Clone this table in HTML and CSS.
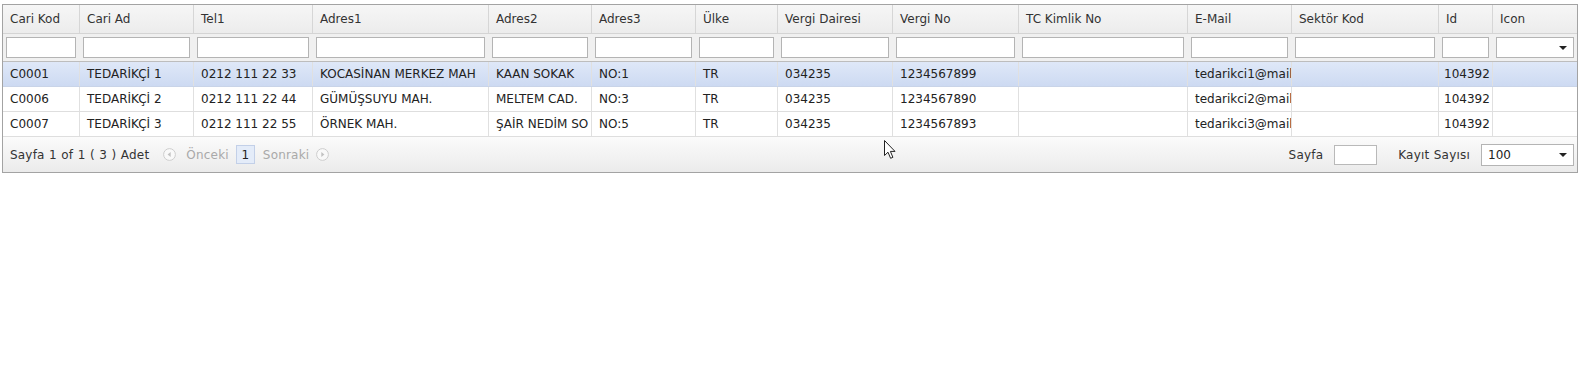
FILE: index.html
```html
<!DOCTYPE html>
<html lang="tr">
<head>
<meta charset="utf-8">
<title>Tedarikçi Listesi</title>
<link rel="stylesheet" href="styles.css">
</head>
<body>
<div class="grid">
  <div class="row hdr">
    <div class="cell">Cari Kod</div>
    <div class="cell">Cari Ad</div>
    <div class="cell">Tel1</div>
    <div class="cell">Adres1</div>
    <div class="cell">Adres2</div>
    <div class="cell">Adres3</div>
    <div class="cell">Ülke</div>
    <div class="cell">Vergi Dairesi</div>
    <div class="cell">Vergi No</div>
    <div class="cell">TC Kimlik No</div>
    <div class="cell">E-Mail</div>
    <div class="cell">Sektör Kod</div>
    <div class="cell">Id</div>
    <div class="cell">Icon</div>
  </div>
  <div class="row filter">
    <div class="cell"><input class="finput" type="text"></div>
    <div class="cell"><input class="finput" type="text"></div>
    <div class="cell"><input class="finput" type="text"></div>
    <div class="cell"><input class="finput" type="text"></div>
    <div class="cell"><input class="finput" type="text"></div>
    <div class="cell"><input class="finput" type="text"></div>
    <div class="cell"><input class="finput" type="text"></div>
    <div class="cell"><input class="finput" type="text"></div>
    <div class="cell"><input class="finput" type="text"></div>
    <div class="cell"><input class="finput" type="text"></div>
    <div class="cell"><input class="finput" type="text"></div>
    <div class="cell"><input class="finput" type="text"></div>
    <div class="cell"><input class="finput" type="text"></div>
    <div class="cell"><div class="fselect"><span class="arrow"></span></div></div>
  </div>
  <div class="row data selected">
    <div class="cell">C0001</div>
    <div class="cell">TEDARİKÇİ 1</div>
    <div class="cell">0212 111 22 33</div>
    <div class="cell">KOCASİNAN MERKEZ MAH</div>
    <div class="cell">KAAN SOKAK</div>
    <div class="cell">NO:1</div>
    <div class="cell">TR</div>
    <div class="cell">034235</div>
    <div class="cell">1234567899</div>
    <div class="cell"></div>
    <div class="cell">tedarikci1@mail</div>
    <div class="cell"></div>
    <div class="cell id">104392</div>
    <div class="cell"></div>
  </div>
  <div class="row data">
    <div class="cell">C0006</div>
    <div class="cell">TEDARİKÇİ 2</div>
    <div class="cell">0212 111 22 44</div>
    <div class="cell">GÜMÜŞSUYU MAH.</div>
    <div class="cell">MELTEM CAD.</div>
    <div class="cell">NO:3</div>
    <div class="cell">TR</div>
    <div class="cell">034235</div>
    <div class="cell">1234567890</div>
    <div class="cell"></div>
    <div class="cell">tedarikci2@mail</div>
    <div class="cell"></div>
    <div class="cell id">104392</div>
    <div class="cell"></div>
  </div>
  <div class="row data">
    <div class="cell">C0007</div>
    <div class="cell">TEDARİKÇİ 3</div>
    <div class="cell">0212 111 22 55</div>
    <div class="cell">ÖRNEK MAH.</div>
    <div class="cell">ŞAİR NEDİM SO</div>
    <div class="cell">NO:5</div>
    <div class="cell">TR</div>
    <div class="cell">034235</div>
    <div class="cell">1234567893</div>
    <div class="cell"></div>
    <div class="cell">tedarikci3@mail</div>
    <div class="cell"></div>
    <div class="cell id">104392</div>
    <div class="cell"></div>
  </div>
  <div class="pager">
    <div class="pager-left">
      <span class="summary">Sayfa 1 of 1 ( 3 ) Adet</span>
      <span class="nav disabled">
        <svg class="circ" width="13" height="13" viewBox="0 0 13 13"><circle cx="6.5" cy="6.5" r="5.9" fill="#f9f9f9" stroke="#cdcdcd"/><path d="M7.7 4 L4.6 6.5 L7.7 9 Z" fill="#c2c2c2"/></svg>
        <span class="navtext">Önceki</span>
      </span>
      <span class="pagenum">1</span>
      <span class="nav disabled">
        <span class="navtext">Sonraki</span>
        <svg class="circ" width="13" height="13" viewBox="0 0 13 13"><circle cx="6.5" cy="6.5" r="5.9" fill="#f9f9f9" stroke="#cdcdcd"/><path d="M5.3 4 L8.4 6.5 L5.3 9 Z" fill="#c2c2c2"/></svg>
      </span>
    </div>
    <div class="pager-right">
      <span class="plabel">Sayfa</span>
      <input class="pinput" type="text">
      <span class="plabel klabel">Kayıt Sayısı</span>
      <div class="pselect"><span class="pval">100</span><span class="arrow"></span></div>
    </div>
  </div>
  <svg class="cursor" width="13" height="20" viewBox="0 0 13 20"><path d="M0.5 0.5 L0.5 15.5 L4 12.2 L6.6 18.3 L8.9 17.3 L6.4 11.4 L11 11.4 Z" fill="#fff" stroke="#222" stroke-width="1" stroke-linejoin="round"/></svg>
</div>
</body>
</html>
```
FILE: styles.css
```css
html, body {
  margin: 0;
  padding: 0;
  background: #fff;
}
body {
  padding: 4px 0 0 2px;
  font-family: "DejaVu Sans", Verdana, sans-serif;
  font-size: 12px;
  color: #222;
}
.grid {
  position: relative;
  width: 1576px;
  box-sizing: border-box;
  border: 1px solid #a3a3a3;
  background: #fff;
}
.row {
  display: grid;
  box-sizing: border-box;
  grid-template-columns: 77px 114px 119px 176px 103px 104px 82px 115px 126px 169px 104px 147px 54px 1fr;
}
.cell {
  box-sizing: border-box;
  border-right: 1px solid #dcdcdc;
  white-space: nowrap;
  overflow: hidden;
  display: flex;
  align-items: center;
  padding-left: 7px;
}
.cell:last-child {
  border-right: none;
}
.hdr {
  height: 29px;
  background: linear-gradient(#f6f6f6, #ececec);
  border-bottom: 1px solid #d4d4d4;
  color: #333;
}
.hdr .cell {
  border-right-color: #d6d6d6;
}
.filter {
  height: 28px;
  background: #f0f0f0;
  border-bottom: 1px solid #bdbdbd;
}
.filter .cell {
  padding: 0 3px;
  border-right-color: #f0f0f0;
}
.finput {
  display: block;
  box-sizing: border-box;
  width: 100%;
  height: 21px;
  margin: 0;
  border: 1px solid #b4b4b4;
  background: #fff;
  padding: 0 3px;
  font: inherit;
  outline: none;
}
.fselect {
  position: relative;
  box-sizing: border-box;
  width: 100%;
  height: 21px;
  border: 1px solid #b4b4b4;
  background: #fff;
}
.arrow {
  position: absolute;
  right: 6px;
  top: 50%;
  margin-top: -2px;
  width: 0;
  height: 0;
  border-left: 4px solid transparent;
  border-right: 4px solid transparent;
  border-top: 4px solid #222;
}
.data {
  height: 25px;
  border-bottom: 1px solid #dedede;
  color: #222;
}
.data .cell {
  border-right-color: #e0e0e0;
}
.data .cell.id {
  padding-left: 5px;
}
.selected {
  background: linear-gradient(#dfe8f8, #cddaf2);
  border-bottom-color: #c9d4e8;
}
.pager {
  height: 35px;
  display: flex;
  align-items: center;
  justify-content: space-between;
  background: linear-gradient(#fbfbfb, #ebebeb);
  color: #333;
  padding: 0 3px 0 7px;
  letter-spacing: 0.2px;
  word-spacing: 0.4px;
}
.pager-left {
  display: flex;
  align-items: center;
}
.summary {
  margin-right: 14px;
}
.nav {
  display: flex;
  align-items: center;
  color: #a9a9a9;
}
.nav .circ {
  display: block;
}
.nav .circ:first-child {
  margin-right: 10px;
}
.nav .circ:last-child {
  margin-left: 7px;
}
.pagenum {
  box-sizing: border-box;
  width: 19px;
  height: 19px;
  margin: 0 8px 0 7px;
  display: flex;
  align-items: center;
  justify-content: center;
  background: #e4ecf9;
  border: 1px solid #c3d0e8;
  color: #222;
  letter-spacing: 0;
}
.pager-right {
  display: flex;
  align-items: center;
}
.plabel {
  margin-right: 11px;
}
.klabel {
  margin-left: 21px;
}
.pinput {
  box-sizing: border-box;
  width: 43px;
  height: 20px;
  margin: 0;
  border: 1px solid #b9b9b9;
  background: #fff;
  font: inherit;
  padding: 0 3px;
  outline: none;
}
.pselect {
  position: relative;
  box-sizing: border-box;
  width: 93px;
  height: 22px;
  border: 1px solid #b4b4b4;
  background: #fff;
  display: flex;
  align-items: center;
  padding-left: 6px;
  color: #222;
  letter-spacing: 0;
}
.cursor {
  position: absolute;
  left: 881px;
  top: 135px;
}
```
